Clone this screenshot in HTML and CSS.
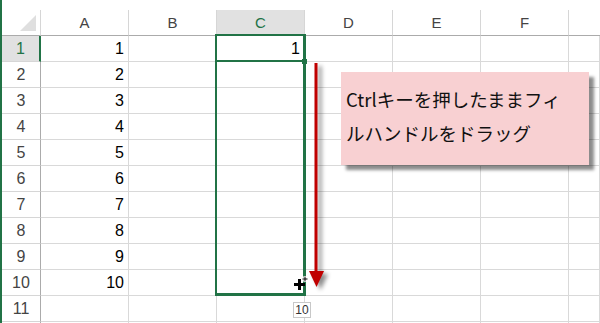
FILE: index.html
```html
<!DOCTYPE html>
<html>
<head>
    <title>Fill Handle</title>
    <link rel="stylesheet" href="styles.css">
</head>
<body>
    <div class="window">
        <div class="sheet">
            <div class="corner"><span class="tri"></span></div>
            <div class="colhead">A</div>
            <div class="colhead">B</div>
            <div class="colhead active">C</div>
            <div class="colhead">D</div>
            <div class="colhead">E</div>
            <div class="colhead">F</div>
            <div class="colhead last"></div>
        </div>

        <!-- selection overlay -->
        <div class="range"></div>
        <div class="active-line"></div>
        <div class="handle"></div>

        <svg class="arrow" width="30" height="240" viewBox="0 0 30 240">
            <rect x="10.5" y="3" width="3" height="210" fill="#c00000"/>
            <polygon points="5,211 20,211 12.5,227" fill="#c00000"/>
        </svg>

        <div class="callout">Ctrlキーを押したままフィ<br>ルハンドルをドラッグ</div>

        <svg class="cursor" width="18" height="18" viewBox="0 0 18 18">
            <rect x="3" y="8" width="11" height="3" fill="#000"/>
            <rect x="7" y="4" width="3" height="11" fill="#000"/>
            <path d="M14 1v6M11 4h6" stroke="#fff" stroke-width="3"/>
            <path d="M14 1.5v5M11.5 4h5" stroke="#000" stroke-width="1"/>
        </svg>

        <div class="tip">10</div>
    </div>

    <script>
        const sheet = document.querySelector('.sheet');
        const cols = 7;
        for (let r = 1; r <= 12; r++) {
            const head = document.createElement('div');
            head.className = 'rowhead' + (r === 1 ? ' active' : '');
            // row 12 is only a sliver at the bottom edge
            if (r <= 11) head.textContent = r;
            sheet.appendChild(head);
            for (let c = 0; c < cols; c++) {
                const cell = document.createElement('div');
                cell.className = 'cell';
                if (c === 0 && r <= 10) cell.textContent = r;
                if (c === 2 && r === 1) cell.textContent = '1';
                sheet.appendChild(cell);
            }
        }
    </script>
</body>
</html>
```

FILE: styles.css
```css
body {
    margin: 0;
    padding: 0;
    width: 600px;
    height: 323px;
    overflow: hidden;
    background: #fff;
    font-family: "Liberation Sans", Arial, sans-serif;
}
.window {
    position: relative;
    height: 323px;
    overflow: hidden;
    border-left: 2px solid #217346;
    padding-top: 10px;
    box-sizing: border-box;
}
.sheet {
    display: grid;
    grid-template-columns: 39px repeat(6, 88px) 1fr;
    grid-template-rows: 26px repeat(12, 26px);
}
.sheet > div {
    box-sizing: border-box;
}
.corner {
    position: relative;
    border-right: 1px solid #d6d6d6;
    border-bottom: 1px solid #ababab;
}
.tri {
    position: absolute;
    right: 4px;
    bottom: 4px;
    width: 0;
    height: 0;
    border-left: 16px solid transparent;
    border-bottom: 16px solid #dfdfdf;
}
.colhead {
    display: flex;
    align-items: center;
    justify-content: center;
    font-size: 15px;
    color: #444;
    border-right: 1px solid #d6d6d6;
    border-bottom: 1px solid #ababab;
}
.colhead.active {
    background: #e1e1e1;
    color: #217346;
}
.colhead.last {
    border-right: none;
}
.rowhead {
    display: flex;
    align-items: center;
    justify-content: center;
    font-size: 16px;
    color: #444;
    border-right: 1px solid #ababab;
    border-bottom: 1px solid #d6d6d6;
}
.rowhead.active {
    background: #e1e1e1;
    color: #217346;
    border-right: 2px solid #217346;
}
.cell {
    display: flex;
    align-items: center;
    justify-content: flex-end;
    padding-right: 4px;
    font-size: 16px;
    color: #000;
    border-right: 1px solid #d9d9d9;
    border-bottom: 1px solid #d9d9d9;
}
.range {
    position: absolute;
    left: 213px;
    top: 34px;
    width: 91px;
    height: 262px;
    box-sizing: border-box;
    border-style: solid;
    border-color: #217346;
    border-width: 2px 3px 3px 2px;
}
.active-line {
    position: absolute;
    left: 213px;
    top: 60px;
    width: 89px;
    height: 2px;
    background: #217346;
}
.handle {
    position: absolute;
    left: 300px;
    top: 59px;
    width: 5px;
    height: 5px;
    background: #217346;
}
.arrow {
    position: absolute;
    left: 302px;
    top: 60px;
    filter: drop-shadow(4px 3px 2px rgba(0, 0, 0, 0.45));
}
.callout {
    position: absolute;
    left: 339px;
    top: 72px;
    width: 248px;
    height: 93px;
    box-sizing: border-box;
    padding: 10px 0 0 5px;
    background: #f8d0d2;
    box-shadow: 5px 5px 3px rgba(0, 0, 0, 0.45);
    font-family: "Noto Sans CJK JP", sans-serif;
    font-size: 18.5px;
    line-height: 34px;
    color: #111;
}
.cursor {
    position: absolute;
    left: 289px;
    top: 275px;
}
.tip {
    position: absolute;
    left: 291px;
    top: 302px;
    width: 18px;
    height: 16px;
    box-sizing: border-box;
    border: 1px solid #c8c8c8;
    background: #fff;
    font-size: 12px;
    line-height: 14px;
    text-align: center;
    color: #333;
}
```
